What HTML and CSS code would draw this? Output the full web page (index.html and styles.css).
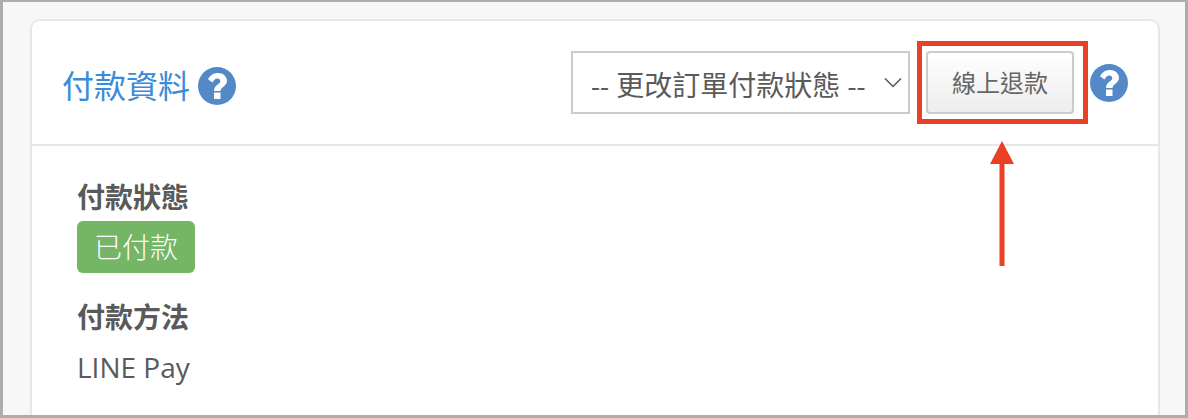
FILE: index.html
```
<!DOCTYPE html>
<html lang="zh-Hant">
<head>
    <meta charset="UTF-8">
    <meta name="viewport" content="width=device-width, initial-scale=1.0">
    <title>付款資料</title>
    <link rel="stylesheet" href="styles.css">
</head>
<body>

    <div class="page">
        <section class="card">
            <header class="card-header">
                <h2 class="card-title">付款資料
                    <svg class="help-icon" viewBox="0 0 38 38" aria-hidden="true">
                        <circle cx="19" cy="19" r="19" fill="#5489c7"/>
                        <path d="M10 12.300C12.300 8 15.800 6 20 6C25 6 29 9.500 29 14C29 19 22.500 20 22.500 24H16C16 17.500 22.300 17.500 22.300 14.200C22.300 12.500 21 11.500 19.300 11.500C17.200 11.500 16 12.600 14.500 15.500Z" fill="#fff"/>
                        <rect x="16" y="25.500" width="6.500" height="6.500" fill="#fff"/>
                    </svg>
                </h2>

                <div class="actions">
                    <div class="select-box">
                        <select class="status-select" aria-label="更改訂單付款狀態">
                            <option>-- 更改訂單付款狀態 --</option>
                        </select>
                        <svg class="chevron" viewBox="0 0 18 12" aria-hidden="true">
                            <path d="M1 1.500L9 9.500L17 1.500" fill="none" stroke="#555" stroke-width="1.500"/>
                        </svg>
                    </div>

                    <div class="refund">
                        <button type="button" class="refund-btn">線上退款</button>
                        <div class="highlight"></div>
                        <svg class="arrow" viewBox="0 0 24 125" aria-hidden="true">
                            <path d="M12 0L24 23H14.500V125H9.500V23H0Z" fill="#ea4025"/>
                        </svg>
                    </div>

                    <svg class="help-icon" viewBox="0 0 38 38" aria-hidden="true">
                        <circle cx="19" cy="19" r="19" fill="#5489c7"/>
                        <path d="M10 12.300C12.300 8 15.800 6 20 6C25 6 29 9.500 29 14C29 19 22.500 20 22.500 24H16C16 17.500 22.300 17.500 22.300 14.200C22.300 12.500 21 11.500 19.300 11.500C17.200 11.500 16 12.600 14.500 15.500Z" fill="#fff"/>
                        <rect x="16" y="25.500" width="6.500" height="6.500" fill="#fff"/>
                    </svg>
                </div>
            </header>

            <dl class="details">
                <dt>付款狀態</dt>
                <dd><span class="badge">已付款</span></dd>
                <dt>付款方法</dt>
                <dd>LINE Pay</dd>
            </dl>
        </section>
    </div>

</body>
</html>
```
FILE: styles.css
```
* {
    box-sizing: border-box;
}

body {
    margin: 0;
    font-family: "Open Sans", "Noto Sans CJK TC", sans-serif;
    font-size: 28px;
    color: #5a5a5a;
}

.page {
    display: flex;
    min-height: 100vh;
    padding: 17px 25px 0 27px;
    border: 3px solid #adadad;
    border-top-width: 2px;
    background-color: #f7f7f7;
}

.card {
    flex: 1;
    border: 2px solid #e7e7e7;
    border-bottom: none;
    border-radius: 10px 10px 0 0;
    background-color: #ffffff;
}

.card-header {
    display: flex;
    align-items: center;
    justify-content: space-between;
    padding: 30px;
    border-bottom: 2px solid #e7e7e7;
}

.card-title {
    display: flex;
    align-items: center;
    gap: 8px;
    margin: 0;
    padding-top: 6px;
    font-size: 32px;
    line-height: 40px;
    font-weight: 400;
    color: #3a8bd8;
}

.help-icon {
    display: block;
    width: 38px;
    height: 38px;
}

.actions {
    display: flex;
    align-items: center;
    gap: 16px;
}

.select-box,
.refund {
    position: relative;
}

.status-select {
    display: block;
    width: 339px;
    height: 63px;
    padding: 4px 40px 0 18px;
    border: 2px solid #cccccc;
    border-radius: 0;
    background-color: #ffffff;
    font: inherit;
    color: inherit;
    appearance: none;
}

/* arrow of the drop-down */
.chevron {
    position: absolute;
    top: 26px;
    right: 8px;
    width: 18px;
    height: 12px;
    pointer-events: none;
}

.refund-btn {
    display: block;
    width: 148px;
    height: 63px;
    padding: 0 0 2px;
    border: 2px solid #cccccc;
    border-radius: 4px;
    background: linear-gradient(#ffffff, #ededed);
    font: inherit;
    font-size: 24px;
    color: #666666;
}

.highlight {
    position: absolute;
    top: -10px;
    right: -14px;
    bottom: -10px;
    left: -9px;
    border: 5px solid #ea4025;
    pointer-events: none;
}

.arrow {
    position: absolute;
    top: 90px;
    left: 64px;
    width: 24px;
    height: 125px;
    pointer-events: none;
}

.details {
    margin: 0;
    padding: 27px 45px 0;
}

.details dt {
    line-height: 48px;
    font-weight: 700;
}

.details dd {
    margin: 0 0 20px;
    line-height: 52px;
}

.details dd:last-child {
    margin-bottom: 0;
}

.badge {
    display: inline-block;
    padding: 0 17px;
    border-radius: 6px;
    background-color: #75b566;
    font-weight: 300;
    color: #ffffff;
    vertical-align: top;
}
```
